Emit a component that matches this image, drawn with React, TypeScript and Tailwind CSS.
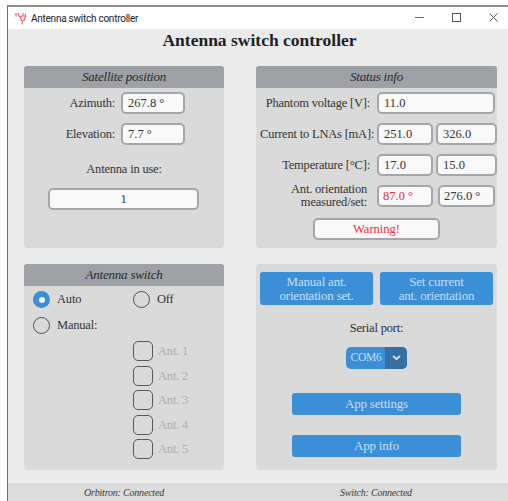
import React from 'react';

const serif = "font-['Liberation_Serif',serif]";

const Field: React.FC<{ value: string; className?: string }> = ({ value, className = '' }) => (
	<div className={`h-[22px] flex items-center rounded-[5px] border-2 border-[#a3a6ab] bg-[#f9f9f9] text-[12.5px] leading-[16px] tracking-normal text-[#333] ${className}`}>
		{value}
	</div>
);

const Label: React.FC<{ children: React.ReactNode; className?: string }> = ({ children, className = '' }) => (
	<div className={`whitespace-nowrap text-right text-[12.5px] leading-[13px] text-[#333] ${className}`}>{children}</div>
);

const PanelHeader: React.FC<{ title: string }> = ({ title }) => (
	<div className="h-[22px] flex items-center justify-center rounded-t-[3px] bg-[#9ea1a5] text-[13px] italic text-[#2a2a2a]">
		{title}
	</div>
);

const Radio: React.FC<{ label: string; checked?: boolean; className?: string }> = ({ label, checked, className = '' }) => (
	<div className={`flex items-center gap-[7px] ${className}`}>
		{checked ? (
			<span className="w-[17px] h-[17px] rounded-full bg-[#3a8fd6] flex items-center justify-center">
				<span className="w-[6px] h-[6px] rounded-full bg-[#f5f5f5]" />
			</span>
		) : (
			<span className="w-[17px] h-[17px] rounded-full border-[1.5px] border-[#4d4f52]" />
		)}
		<span className="text-[12.5px] leading-[17px] text-[#333]">{label}</span>
	</div>
);

const Check: React.FC<{ label: string }> = ({ label }) => (
	<div className="flex items-center gap-[5px] h-[20px]">
		<span className="w-[20px] h-[20px] rounded-[5px] border-[1.5px] border-[#55585c]" />
		<span className="text-[12.5px] leading-[16px] text-[#adadad]">{label}</span>
	</div>
);

const BlueButton: React.FC<{ className?: string; children: React.ReactNode }> = ({ className = '', children }) => (
	<div className={`flex items-center justify-center text-center rounded-[3px] bg-[#3a8fd6] text-[13px] leading-[14px] text-[#c6dff5] ${className}`}>
		{children}
	</div>
);

const App: React.FC = () => {
	return (
		<div className="w-[508px] h-[501px] bg-white pt-[5px] pl-[7px] overflow-hidden">
			<div className={`w-[501px] h-[496px] flex flex-col border-t-2 border-l border-t-[#8f8f8f] border-l-[#6f6f6f] bg-[#ebebeb] tracking-[-0.2px] ${serif}`}>
				{/* window title bar */}
				<div className="h-[22px] flex items-center bg-white pl-[6px] shrink-0">
					<svg width="13" height="13" viewBox="0 0 13 13" fill="none" stroke="#f2606f" strokeWidth="1.1">
						<path d="M0.5 2h3M2 2v2.5M4.5 1v2.5l2 2 1-1.5h1.5V1M9 4h2.5V1.5M11.5 4l-1 4-2 1-.5 3.5M6.5 5.5l1 3.5" />
					</svg>
					<span className="ml-[4px] font-['Roboto',sans-serif] text-[10px] tracking-[-0.25px] text-[#222]">Antenna switch controller</span>
					<div className="ml-auto mb-[2px] flex items-center gap-[28px] pr-[10px]">
						<svg width="9" height="9" viewBox="0 0 9 9" stroke="#666" strokeWidth="1"><path d="M0 4.5h9" /></svg>
						<svg width="9" height="9" viewBox="0 0 9 9" fill="none" stroke="#555" strokeWidth="1"><rect x="0.5" y="0.5" width="8" height="8" /></svg>
						<svg width="9" height="9" viewBox="0 0 9 9" stroke="#555" strokeWidth="1"><path d="M0.5 0.5l8 8M8.5 0.5l-8 8" /></svg>
					</div>
				</div>

				<h1 className="h-[37px] pl-[3px] text-center text-[17.5px] font-bold leading-[22px] tracking-normal text-[#1f1f1f]">
					Antenna switch controller
				</h1>

				<div className="grid grid-cols-[200px_241px] grid-rows-[182px_206px] gap-x-[32px] gap-y-[16px] pl-[16px]">
					{/* satellite position */}
					<section className="rounded-[4px] bg-[#dadada]">
						<PanelHeader title="Satellite position" />
						<div className="flex flex-col gap-[9px] pt-[4px]">
							<div className="flex items-center">
								<Label className="w-[91px]">Azimuth:</Label>
								<Field value="267.8 °" className="ml-[6px] w-[64px] pl-[5px]" />
							</div>
							<div className="flex items-center">
								<Label className="w-[91px]">Elevation:</Label>
								<Field value="7.7 °" className="ml-[6px] w-[64px] pl-[5px]" />
							</div>
						</div>
						<div className="mt-[16px] text-center text-[12.5px] leading-[16px] text-[#333]">Antenna in use:</div>
						<Field value="1" className="mt-[11px] ml-[24px] w-[151px] justify-center" />
					</section>

					{/* status info */}
					<section className="rounded-[4px] bg-[#dadada]">
						<PanelHeader title="Status info" />
						<div className="flex flex-col gap-[9px] pt-[4px] pl-[4px]">
							<div className="flex items-center gap-[7px]">
								<Label className="w-[110px]">Phantom voltage [V]:</Label>
								<Field value="11.0" className="w-[118px] pl-[5px]" />
							</div>
							<div className="flex items-center gap-[7px]">
								<Label className="w-[110px]">Current to LNAs [mA]:</Label>
								<div className="flex gap-[3px]">
									<Field value="251.0" className="w-[56px] pl-[5px]" />
									<Field value="326.0" className="w-[61px] pl-[5px]" />
								</div>
							</div>
							<div className="flex items-center gap-[7px]">
								<Label className="w-[110px]">Temperature [°C]:</Label>
								<div className="flex gap-[3px]">
									<Field value="17.0" className="w-[56px] pl-[5px]" />
									<Field value="15.0" className="w-[61px] pl-[5px]" />
								</div>
							</div>
							<div className="flex items-start gap-[7px] h-[22px]">
								<Label className="w-[110px] pr-[3px] -mt-[2px]">
									Ant. orientation
									<br />
									measured/set:
								</Label>
								<div className="flex gap-[5px]">
									<Field value="87.0 °" className="w-[56px] pl-[4px] !text-[#f52c3e]" />
									<Field value="276.0 °" className="w-[57px] pl-[4px]" />
								</div>
							</div>
						</div>
						<Field value="Warning!" className="mt-[11px] ml-[57px] w-[127px] justify-center !text-[#f52c3e]" />
					</section>

					{/* antenna switch */}
					<section className="rounded-[4px] bg-[#dadada]">
						<PanelHeader title="Antenna switch" />
						<div className="flex pt-[5px] pl-[9px]">
							<Radio label="Auto" checked className="w-[100px]" />
							<Radio label="Off" />
						</div>
						<Radio label="Manual:" className="mt-[9px] ml-[9px]" />
						<div className="flex flex-col gap-[4.5px] mt-[7px] ml-[109px]">
							<Check label="Ant. 1" />
							<Check label="Ant. 2" />
							<Check label="Ant. 3" />
							<Check label="Ant. 4" />
							<Check label="Ant. 5" />
						</div>
					</section>

					{/* actions */}
					<section className="rounded-[4px] bg-[#dadada] flex flex-col items-center">
						<div className="flex gap-[7px] pt-[8px]">
							<BlueButton className="w-[113px] h-[33px]">
								Manual ant.
								<br />
								orientation set.
							</BlueButton>
							<BlueButton className="w-[113px] h-[33px]">
								Set current
								<br />
								ant. orientation
							</BlueButton>
						</div>
						<div className="mt-[15px] text-[12.5px] leading-[16px] text-[#2e2e2e]">Serial port:</div>
						<div className="mt-[11px] flex w-[61px] h-[22px] rounded-[5px] overflow-hidden bg-[#3a8fd6] text-[11.5px] text-[#c6dff5]">
							<span className="w-[39px] pl-[1px] flex items-center justify-center">COM6</span>
							<span className="flex-1 flex items-center justify-center bg-[#366fa1]">
								<svg width="9" height="6" viewBox="0 0 9 6" fill="none" stroke="#dbe8f3" strokeWidth="1.8"><path d="M1 1l3.5 3L8 1" /></svg>
							</span>
						</div>
						<BlueButton className="mt-[24px] w-[169px] h-[22px]">App settings</BlueButton>
						<BlueButton className="mt-[20px] w-[169px] h-[22px]">App info</BlueButton>
					</section>
				</div>

				{/* status bar */}
				<div className="mt-[13px] h-[18px] shrink-0 grid grid-cols-[232px_1fr] bg-[#dcdcdc] text-[10px] italic text-[#3a3a3a]">
					<div className="flex items-center justify-center">Orbitron: Connected</div>
					<div className="flex items-center justify-center pl-[4px]">Switch: Connected</div>
				</div>
			</div>
		</div>
	);
};

export default App;
